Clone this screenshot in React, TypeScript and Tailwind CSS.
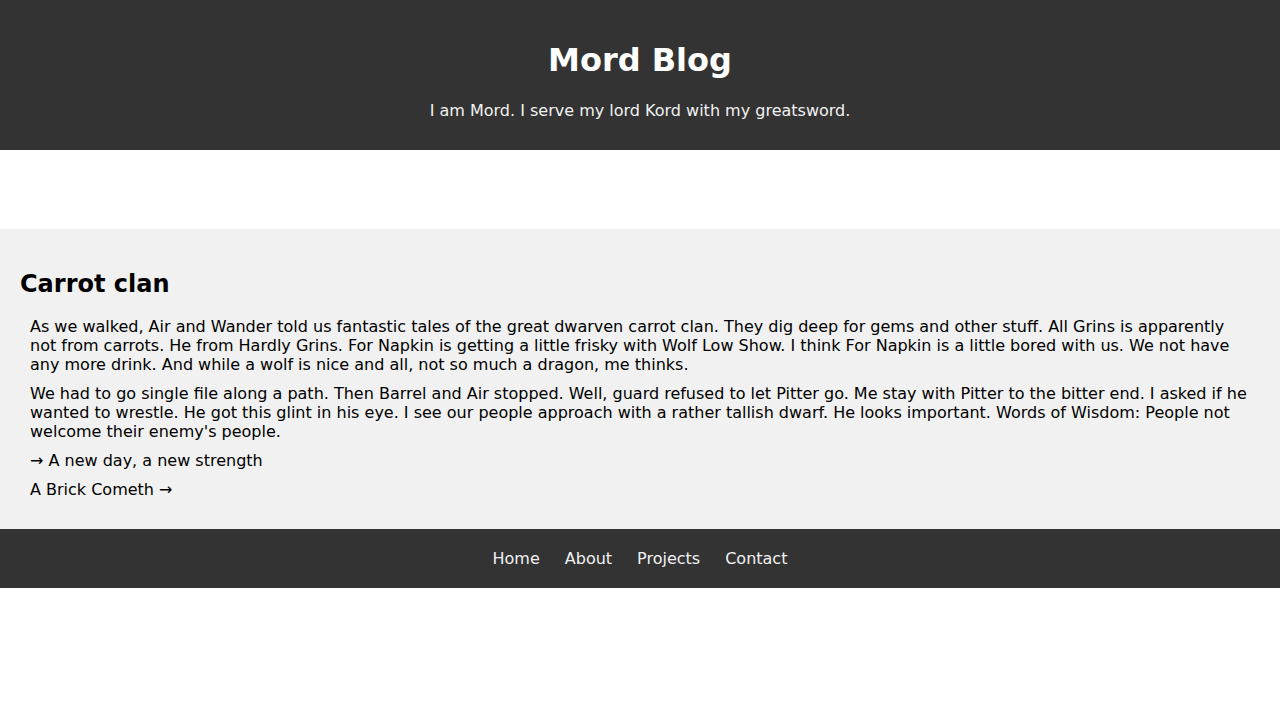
import React from "react";

const links = ["Home", "About", "Projects", "Contact"];

const App: React.FC = () => {
  return (
    <div className="min-h-[720px] bg-white font-['DejaVu_Sans',sans-serif] text-[16px] leading-[19px]">
      {/* Header */}
      <header className="h-[150px] bg-[#333333] flex flex-col items-center pt-[41px] text-center">
        <h1 className="text-[32px] leading-[38px] font-bold text-white">Mord Blog</h1>
        <p className="mt-[22px] text-[#f1f1f1]">
          I am Mord. I serve my lord Kord with my greatsword.
        </p>
      </header>

      <div className="h-[79px]" />

      {/* Post */}
      <article className="bg-[#f1f1f1] px-[20px] pt-[41px] pb-[30px] text-black">
        <h2 className="text-[24px] leading-[28px] font-bold">Carrot clan</h2>
        <div className="mt-[19px] mx-[10px] flex flex-col gap-[10px]">
          <p>
            As we walked, Air and Wander told us fantastic tales of the great dwarven carrot clan. They dig deep for gems and other stuff. All Grins is apparently not from carrots. He from Hardly Grins. For Napkin is getting a little frisky with Wolf Low Show. I think For Napkin is a little bored with us. We not have any more drink. And while a wolf is nice and all, not so much a dragon, me thinks.
          </p>
          <p>
            We had to go single file along a path. Then Barrel and Air stopped. Well, guard refused to let Pitter go. Me stay with Pitter to the bitter end. I asked if he wanted to wrestle. He got this glint in his eye. I see our people approach with a rather tallish dwarf. He looks important. Words of Wisdom: People not welcome their enemy's people.
          </p>
          <p>→ A new day, a new strength</p>
          <p>A Brick Cometh →</p>
        </div>
      </article>

      {/* Footer */}
      <footer className="h-[59px] bg-[#333333] flex items-center justify-center gap-[25px]">
        {links.map((l) => (
          <a key={l} href="#" className="text-[#f1f1f1]">
            {l}
          </a>
        ))}
      </footer>
    </div>
  );
};

export default App;
